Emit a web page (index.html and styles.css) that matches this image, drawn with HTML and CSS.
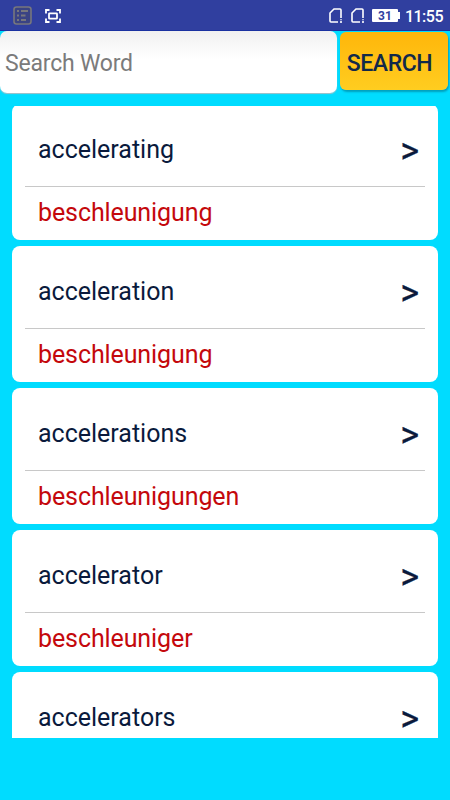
FILE: index.html
```html
<!DOCTYPE html>
<html lang="en">
  <head>
    <meta charset="utf-8">
    <title>Dictionary</title>
    <link rel="stylesheet" href="styles.css">
  </head>

  <body>

    <div class="status_bar">
      <svg class="icon_list" width="19" height="19" viewBox="0 0 19 19" fill="none" stroke="#77777d">
        <rect x="1" y="1" width="17" height="17" rx="2.5" fill="#3a4384" stroke-width="1.6"/>
        <path d="M4 5h2M8 5h7M4 9.500h2M8 9.500h4.500M4 14h2M8 14h5" stroke-width="1.800"/>
      </svg>
      <svg class="icon_shot" width="16" height="14" viewBox="0 0 16 14" fill="none" stroke="#fff" stroke-width="1.800">
        <path d="M1 4.500V1h3.500M11.500 1H15v3.500M15 9.500V13h-3.500M4.500 13H1V9.500"/>
        <rect x="4" y="4.300" width="8" height="5.400" rx=".5"/>
      </svg>

      <div class="status_right">
        <svg class="icon_sim" width="14" height="15" viewBox="0 0 14 15" fill="none" stroke="#fff" stroke-width="1.600">
          <path d="M13 10V2Q13 1 12 1H6L2 5V13Q2 14 3 14H10"/>
          <path d="M13 11.200v1M13 13v2"/>
        </svg>
        <svg class="icon_sim" width="14" height="15" viewBox="0 0 14 15" fill="none" stroke="#fff" stroke-width="1.600">
          <path d="M13 10V2Q13 1 12 1H6L2 5V13Q2 14 3 14H10"/>
          <path d="M13 11.200v1M13 13v2"/>
        </svg>
        <span class="battery">31</span>
        <span class="clock">11:55</span>
      </div>
    </div>

    <form class="search">
      <input class="search_input" type="text" placeholder="Search Word">
      <button class="search_button" type="button">SEARCH</button>
    </form>

    <div class="list">
      <div class="card">
        <div class="word"><span>accelerating</span><span class="arrow">&gt;</span></div>
        <div class="meaning">beschleunigung</div>
      </div>
      <div class="card">
        <div class="word"><span>acceleration</span><span class="arrow">&gt;</span></div>
        <div class="meaning">beschleunigung</div>
      </div>
      <div class="card">
        <div class="word"><span>accelerations</span><span class="arrow">&gt;</span></div>
        <div class="meaning">beschleunigungen</div>
      </div>
      <div class="card">
        <div class="word"><span>accelerator</span><span class="arrow">&gt;</span></div>
        <div class="meaning">beschleuniger</div>
      </div>
      <div class="card">
        <div class="word"><span>accelerators</span><span class="arrow">&gt;</span></div>
      </div>
    </div>

  </body>
</html>
```

FILE: styles.css
```css
* {
  box-sizing: border-box;
}

body {
  margin: 0;
  height: 800px;
  overflow: hidden;
  background: #00dcff;
  font-family: Roboto, sans-serif;
}

.status_bar {
  display: flex;
  align-items: center;
  height: 31px;
  padding: 1px 8px 0 13px;
  background: #303f9f;
  border-bottom: 1px solid #1a31a0;
  color: #fff;
}

.icon_shot {
  margin-left: 13px;
}

.status_right {
  display: flex;
  align-items: center;
  margin-left: auto;
}

.icon_sim {
  margin-right: 8px;
}

.battery {
  position: relative;
  width: 26px;
  height: 13px;
  margin-right: 7px;
  background: #fff;
  border-radius: 1px;
  color: #303f9f;
  font-size: 12px;
  font-weight: 700;
  line-height: 14px;
  text-align: center;
}

/* battery tip */
.battery:after {
  content: '';
  position: absolute;
  top: 3px;
  right: -2px;
  width: 2px;
  height: 7px;
  background: #fff;
}

.clock {
  margin-right: -1px;
  padding-top: 1px;
  font-size: 16px;
  font-weight: 500;
  letter-spacing: -0.5px;
}

.search {
  display: flex;
  align-items: flex-start;
  height: 75px;
}

.search_input {
  width: 337px;
  height: 62px;
  padding: 3px 5px 0;
  border: none;
  border-radius: 7px;
  outline: 0;
  background: linear-gradient(#f0f0f0, #fff 45%);
  box-shadow: 0 1px 1px #a9bfc6;
  font-family: inherit;
  font-size: 23px;
  letter-spacing: -0.2px;
}

.search_input::placeholder {
  color: #7b7b7b;
  opacity: 1;
}

.search_button {
  width: 108px;
  height: 58px;
  margin: 1px 0 0 3px;
  padding: 5px 9px 0 0;
  border: none;
  border-radius: 6px;
  background: linear-gradient(#ffb60a, #ffcd20);
  box-shadow: 1px 2px 2px rgba(0, 70, 90, 0.4);
  color: #12294a;
  font-family: inherit;
  font-size: 23px;
  font-weight: 500;
  letter-spacing: -0.4px;
}

.list {
  height: 632px;
  padding: 0 12px;
  overflow: hidden;
}

.card {
  height: 136px;
  margin-bottom: 6px;
  padding: 0 13px;
  border-radius: 8px;
  background: #fff;
}

/* list is scrolled a little */
.card:first-child {
  margin-top: -2px;
}

.word {
  display: flex;
  align-items: center;
  justify-content: space-between;
  height: 83px;
  padding: 8px 6px 0 13px;
  border-bottom: 1px solid #c8c8c8;
  color: #0a1a3c;
  font-size: 25px;
}

.arrow {
  padding-top: 3px;
  font-size: 36px;
  font-weight: 400;
  -webkit-text-stroke: 0.3px #0a1a3c;
}

.meaning {
  padding: 11px 13px;
  color: #c4080c;
  font-size: 25px;
  letter-spacing: -0.1px;
  line-height: 30px;
}
```
